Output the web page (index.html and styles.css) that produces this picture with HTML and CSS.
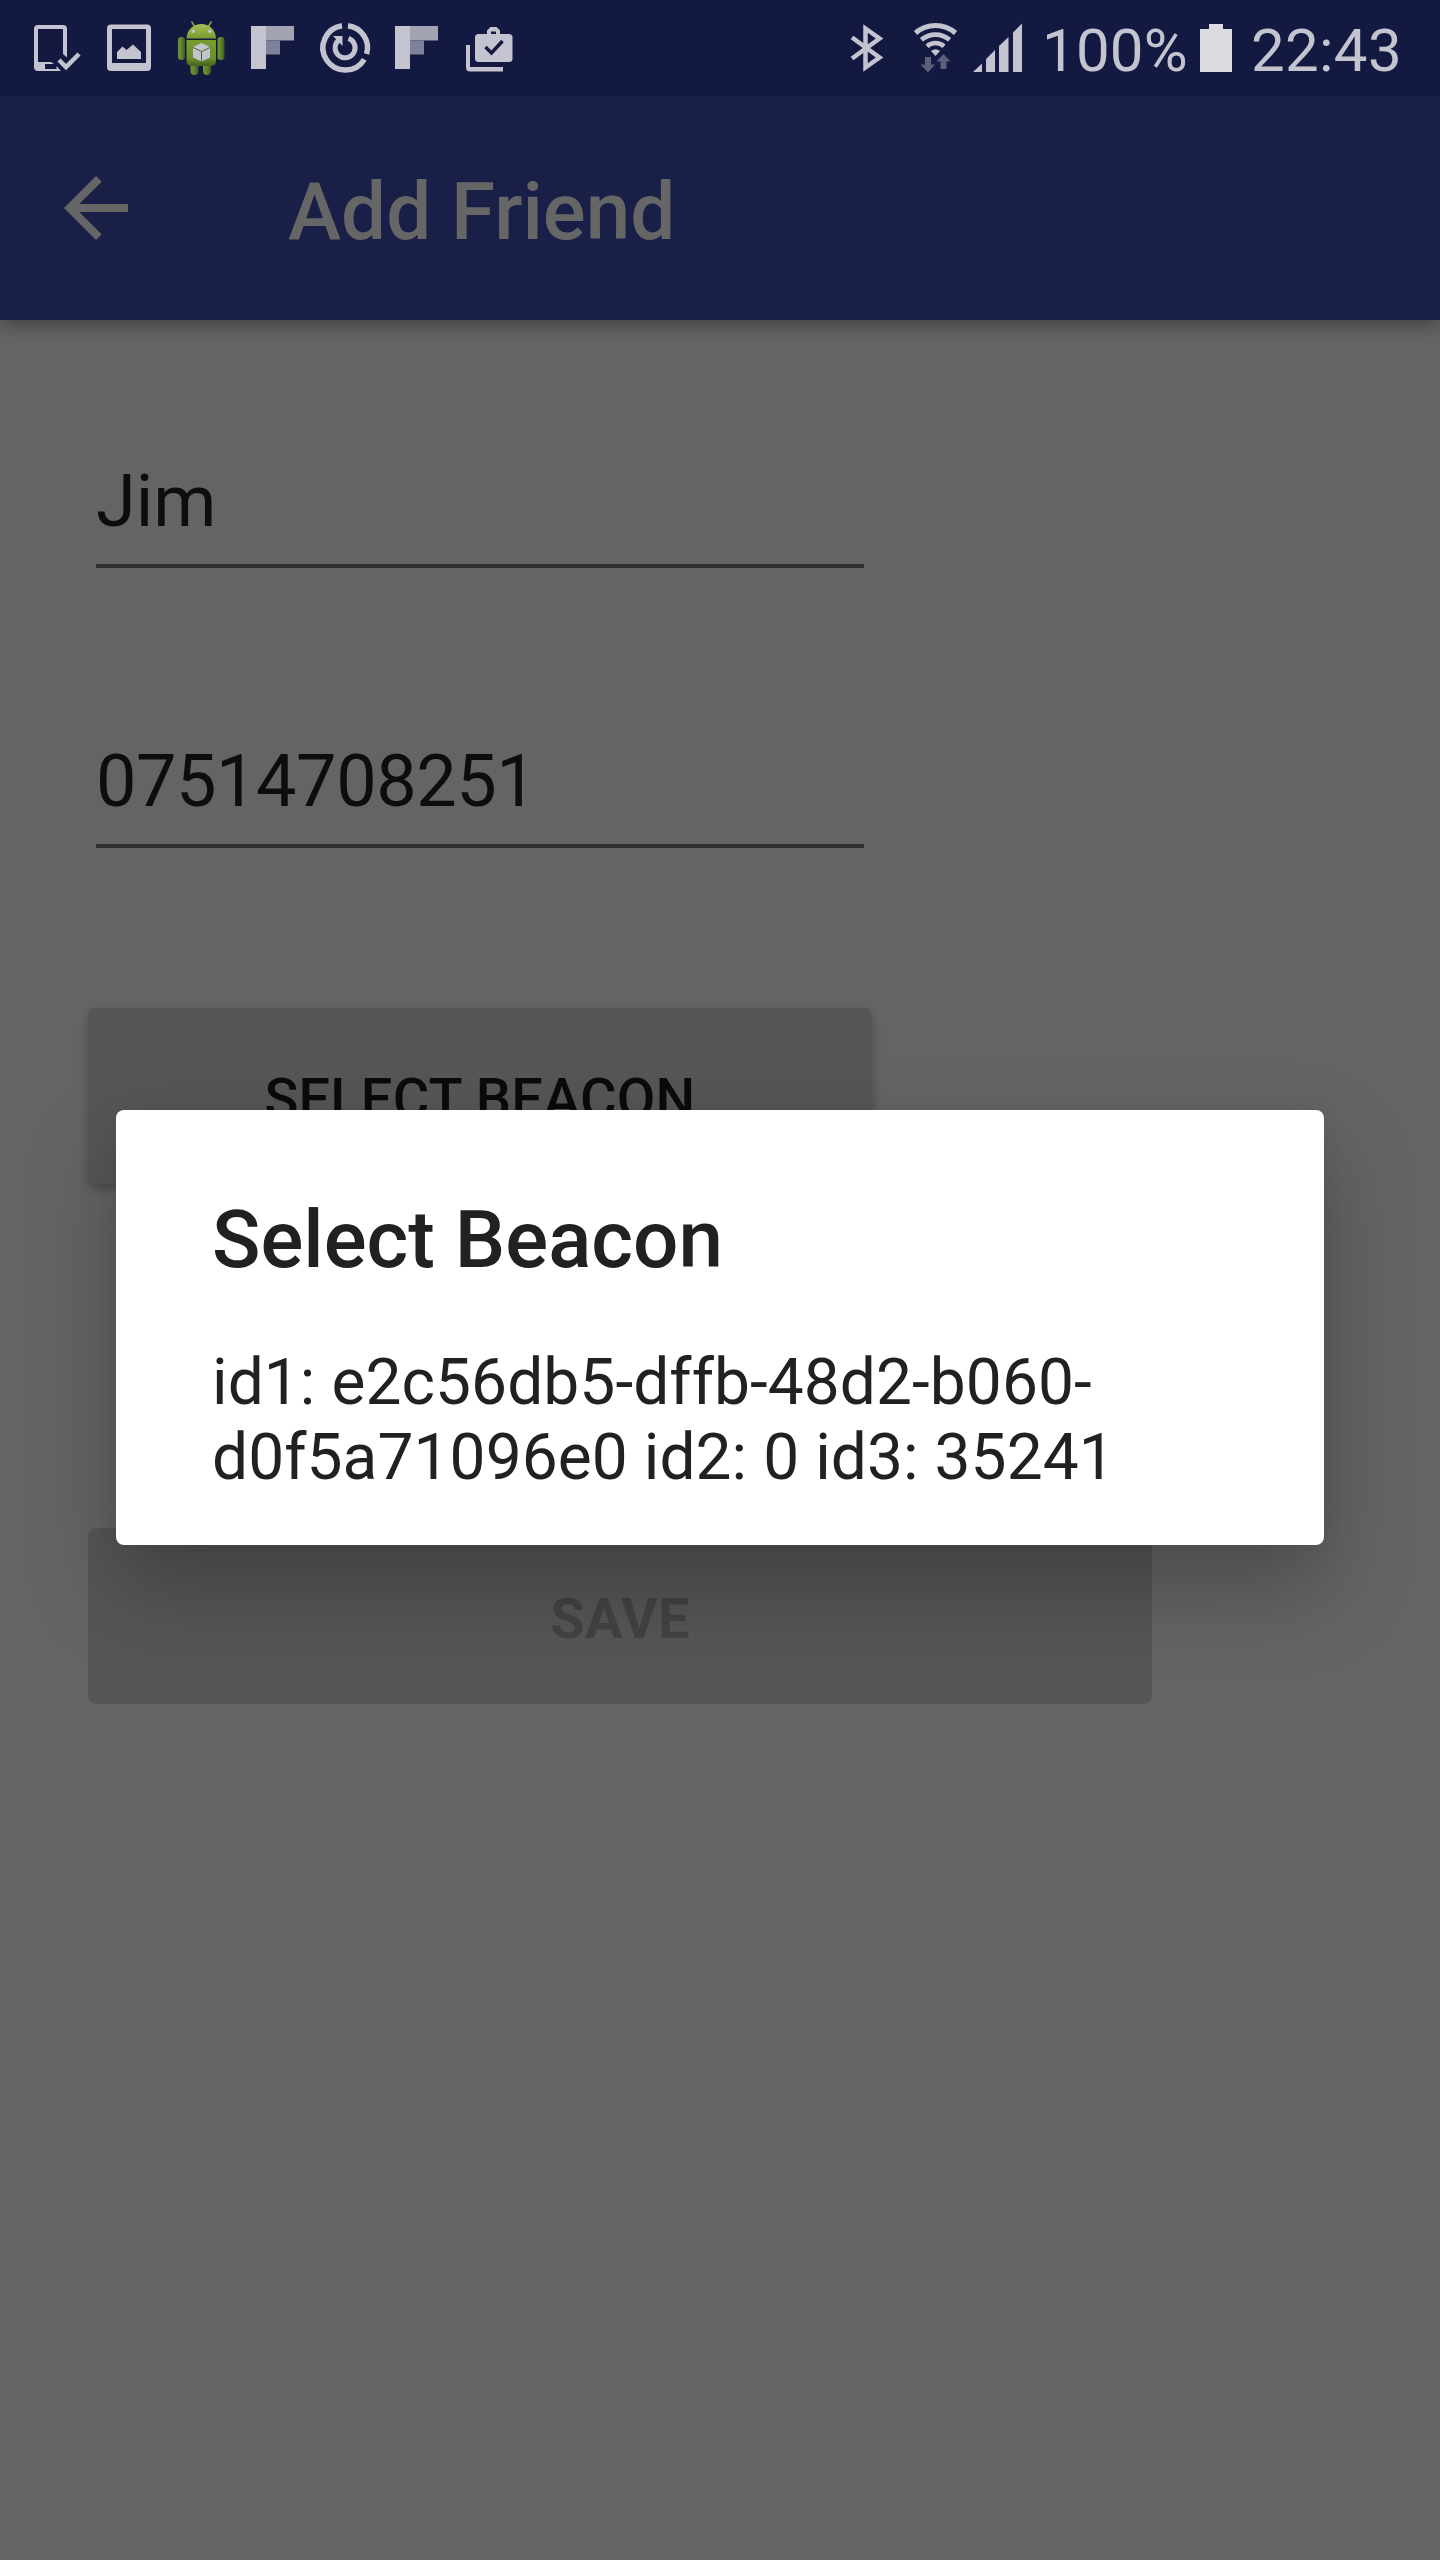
FILE: index.html
```
<!DOCTYPE html>
<html lang="en">
<head>
<meta charset="utf-8">
<title>Add Friend</title>
<link rel="stylesheet" href="styles.css">
</head>
<body>
<div class="screen">
  <div class="status-bar">
    <div class="notifications">
      <svg class="cell" viewBox="21 0 72 96">
        <path class="ink" fill-rule="evenodd" d="M38 25H63Q67 25 67 29V57.500L63 54V29H38V62H51L54 64H45V69H56.500V66L61 71H38Q34 71 34 67V29Q34 25 38 25Z"/>
        <path class="line" stroke-width="4.500" d="M59 60L66 67L79 54"/>
      </svg>
      <svg class="cell" viewBox="93 0 72 96">
        <path class="ink" fill-rule="evenodd" d="M111 24.500H147Q151 24.500 151 28.500V67Q151 71 147 71H111Q107 71 107 67V28.500Q107 24.500 111 24.500ZM112 29V63H146V29Z"/>
        <path class="ink" d="M117 59V52L122.500 46.500L126.500 50L133 44.500L141 52V59Z"/>
      </svg>
      <svg class="cell" viewBox="165 0 72 96">
        <defs>
          <linearGradient id="head" x1="0" y1="0" x2="0" y2="1"><stop offset="0" stop-color="#a9c05c"/><stop offset="1" stop-color="#769c2c"/></linearGradient>
          <linearGradient id="torso" x1="0" y1="0" x2="0" y2="1"><stop offset="0" stop-color="#789d2e"/><stop offset=".7" stop-color="#6a9029"/><stop offset="1" stop-color="#465f22"/></linearGradient>
          <linearGradient id="limb" x1="0" y1="0" x2="1" y2="0"><stop offset="0" stop-color="#6f942f"/><stop offset=".5" stop-color="#60842a"/><stop offset="1" stop-color="#3d5626"/></linearGradient>
        </defs>
        <path d="M191.500 21.500L195 27M211.500 21.500L208 27" stroke="#87a83d" stroke-width="1.500"/>
        <rect x="190.500" y="61" width="8" height="14" rx="4" fill="url(#limb)"/>
        <rect x="203" y="61" width="8" height="14" rx="4" fill="url(#limb)"/>
        <rect x="178" y="37" width="7" height="23" rx="3.200" fill="url(#limb)"/>
        <rect x="217.500" y="37" width="7" height="23" rx="3.200" fill="url(#limb)"/>
        <path d="M186.500 38.500C187 19 215.500 19 216 38.500Z" fill="url(#head)"/>
        <path d="M186.500 40H216V61Q216 66 210 66H192.500Q186.500 66 186.500 61Z" fill="url(#torso)"/>
        <circle class="ink" cx="193.300" cy="31.300" r="1.700"/><circle class="ink" cx="209.700" cy="31.300" r="1.700"/>
        <path class="ink" d="M201.500 43L210 47V57.500L201.500 61.500L193 57.500V47Z"/>
        <path d="M193 47.500L201.500 51.500L210 47.500M201.500 51.500V61.500" fill="none" stroke="#49642b" stroke-width="1"/>
      </svg>
      <svg class="cell" viewBox="237 0 72 96">
        <path class="ink" d="M251 26H266V69H251Z"/><path fill="#a1a3b2" d="M266 26H294V40.500H266Z"/><path fill="#7e8199" d="M266 40.500H280V54.500H266Z"/>
      </svg>
      <svg class="cell" viewBox="309 0 72 96">
        <path class="line" stroke-width="5.500" d="M348 25.700A22.300 22.300 0 0 1 366.600 54M364.300 59.300A22.300 22.300 0 1 1 342 25.700"/>
        <path class="line" stroke-width="5" d="M348.500 38.400A10 10 0 1 1 338.500 40.300"/>
        <path class="ink" d="M333 36H342.500V46Z"/>
      </svg>
      <svg class="cell" viewBox="381 0 72 96">
        <path class="ink" d="M395 26H410V69H395Z"/><path fill="#a1a3b2" d="M410 26H438V40.500H410Z"/><path fill="#7e8199" d="M410 40.500H424V54.500H410Z"/>
      </svg>
      <svg class="cell" viewBox="453 0 72 96">
        <path class="ink" fill-rule="evenodd" d="M478.500 34H487V30.500L490.500 27H496.500L500 30.500V34H509Q512.500 34 512.500 37.500V58.500Q512.500 62 509 62H478.500Q475 62 475 58.500V37.500Q475 34 478.500 34ZM491 31.500V34H496V31.500Z"/>
        <path d="M485.500 47L491.500 53L502.500 41" fill="none" stroke="#141941" stroke-width="3.500"/>
        <path class="ink" d="M466 45H470V67H503V71.500H470Q466 71.500 466 67.500Z"/>
      </svg>
    </div>
    <div class="system">
      <svg class="bluetooth" viewBox="840 0 60 96">
        <path class="line" stroke-width="4.500" d="M852 37.500L879.500 57.500L865.500 67.500V28.500L879.500 38.500L852 58.500"/>
      </svg>
      <svg class="wifi" viewBox="900 0 66 96">
        <path class="line" stroke-width="5" d="M915.500 33A30.500 30.500 0 0 1 955.500 33"/>
        <path class="line" stroke-width="4.700" d="M921.400 39.800A21.500 21.500 0 0 1 949.600 39.800"/>
        <path class="line" stroke-width="4.500" d="M927 46.200A13 13 0 0 1 944 46.200"/>
        <path class="ink" d="M935.500 56L931 51Q935.500 47.500 940 51Z"/>
        <path fill="#5b5f7a" d="M925 57H931V64.500H935L928 72.500L920.500 64.500H925ZM940.500 69V61.500H936.500L943.500 54L950.500 61.500H946.500V69Z"/>
      </svg>
      <svg class="signal" viewBox="966 0 64 96">
        <path class="ink" d="M973 72L982 63.500V72ZM986 72V59L995 50V72ZM999 72V46L1008.500 37V72ZM1013 72V32.500L1022 23.500V72Z"/>
      </svg>
      <span class="percent">100%</span>
      <svg class="battery" viewBox="1200 0 32 96">
        <path fill="#dbdce1" d="M1200 29H1209V24H1223V29H1232V72H1200Z"/>
      </svg>
      <span class="clock">22:43</span>
    </div>
  </div>

  <header class="app-bar">
    <svg class="back" viewBox="0 0 24 24"><path fill="#666" d="M20 11H7.830l5.590-5.590L12 4l-8 8 8 8 1.410-1.410L7.830 13H20z"/></svg>
    <h1 class="title">Add Friend</h1>
  </header>

  <main class="form">
    <div class="field">Jim</div>
    <div class="field number">07514708251</div>
    <button class="button select">SELECT BEACON</button>
    <button class="button save" disabled>SAVE</button>
  </main>

  <section class="dialog" role="dialog">
    <h2 class="dialog-title">Select Beacon</h2>
    <p class="dialog-item">id1: e2c56db5-dffb-48d2-b060-<br>d0f5a71096e0 id2: 0 id3: 35241</p>
  </section>
</div>
</body>
</html>
```
FILE: styles.css
```
* { box-sizing: border-box; }

body {
  margin: 0;
  font-family: Roboto, "Noto Sans", sans-serif;
  background: #646464;
}

.screen {
  position: relative;
  display: flex;
  flex-direction: column;
  width: 1440px;
  height: 2560px;
  overflow: hidden;
  background: #646464;
}

.status-bar {
  z-index: 2;
  display: flex;
  justify-content: space-between;
  flex: none;
  height: 96px;
  padding-left: 21px;
  background: #141941;
  color: #c3c4d0;
  font-size: 60px;
  line-height: 101px;
}

.notifications, .system { display: flex; height: 96px; }
.status-bar svg { display: block; flex: none; height: 96px; }
.cell { width: 72px; }
.bluetooth { width: 60px; }
.wifi { width: 66px; }
.signal { width: 64px; margin-right: 12px; }
.percent { width: 158px; letter-spacing: .2px; }
.battery { width: 32px; }
.clock { width: 208px; padding-left: 19px; letter-spacing: .3px; }

.ink { fill: #c3c4d0; }
.line { fill: none; stroke: #c3c4d0; }

.app-bar {
  z-index: 1;
  display: flex;
  align-items: center;
  flex: none;
  height: 224px;
  padding-left: 48px;
  background: #191f46;
  box-shadow: 0 6px 16px rgba(0, 0, 0, .3);
}

.back { width: 96px; height: 96px; }

.title {
  margin: 0 0 0 144px;
  padding-top: 7px;
  color: #666;
  font-size: 80px;
  font-weight: 500;
  line-height: 94px;
}

.form {
  display: flex;
  flex-direction: column;
  padding: 140px 88px 0;
}

.field {
  width: 768px;
  margin: 0 8px 172px;
  padding-bottom: 20px;
  border-bottom: 4px solid #303030;
  color: #0d0d0d;
  font-size: 72px;
  line-height: 84px;
}

.number {
  margin-bottom: 160px;
  letter-spacing: -.44px;
}

.button {
  height: 176px;
  padding: 6px 0 0;
  border: 0;
  border-radius: 8px;
  background: #565656;
  color: #0b0b0b;
  font-family: inherit;
  font-size: 56px;
  font-weight: 500;
}

.select {
  width: 784px;
  letter-spacing: .2px;
  box-shadow: 0 5px 8px rgba(0, 0, 0, .24);
}

.save {
  width: 1064px;
  margin-top: 344px;
  color: #434343;
  font-weight: 700;
  letter-spacing: .4px;
}

.dialog {
  position: absolute;
  z-index: 2;
  top: 1110px;
  left: 116px;
  width: 1208px;
  height: 435px;
  padding: 83px 96px 50px;
  border-radius: 8px;
  background: #fff;
  color: #212121;
  box-shadow: 0 42px 88px rgba(0, 0, 0, .25), 0 0 24px rgba(0, 0, 0, .04);
}

.dialog-title {
  margin: 0 0 58px;
  font-size: 80px;
  font-weight: 500;
  line-height: 94px;
}

.dialog-item {
  margin: 0;
  font-size: 64px;
  line-height: 75px;
  letter-spacing: .08px;
}
```
